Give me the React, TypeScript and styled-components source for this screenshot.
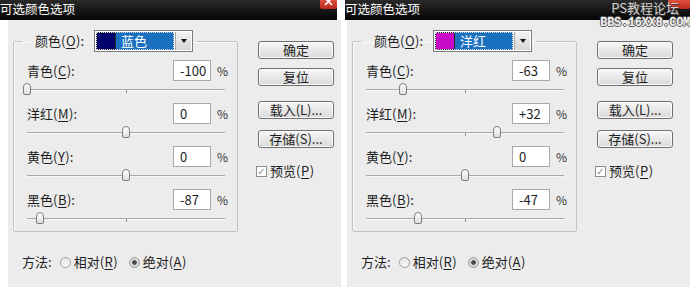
import React from 'react';
import styled, { createGlobalStyle } from 'styled-components';

const GlobalStyle = createGlobalStyle`
  html, body {
    margin: 0;
    padding: 0;
    background: #fff;
  }
  body {
    font-family: "Noto Sans CJK SC", "Liberation Sans", sans-serif;
    font-size: 13px;
    color: #1e1e1e;
  }
`;

type Channel = { name: string; key: string; value: number };
type DialogData = {
  color: string;
  swatch: string;
  channels: Channel[];
  edge: 'left' | 'right';
};

const dialogs: DialogData[] = [
  {
    color: '蓝色',
    swatch: '#03036e',
    edge: 'left',
    channels: [
      { name: '青色', key: 'C', value: -100 },
      { name: '洋红', key: 'M', value: 0 },
      { name: '黄色', key: 'Y', value: 0 },
      { name: '黑色', key: 'B', value: -87 },
    ],
  },
  {
    color: '洋红',
    swatch: '#c80ac8',
    edge: 'right',
    channels: [
      { name: '青色', key: 'C', value: -63 },
      { name: '洋红', key: 'M', value: 32 },
      { name: '黄色', key: 'Y', value: 0 },
      { name: '黑色', key: 'B', value: -47 },
    ],
  },
];

const fmt = (v: number) => (v > 0 ? `+${v}` : `${v}`);

const Page = styled.div`
  display: flex;
  width: 690px;
  height: 303px;
  overflow: hidden;
`;

const Window = styled.div<{ $edge: 'left' | 'right' }>`
  display: flex;
  flex-direction: column;
  width: ${(p) => (p.$edge === 'left' ? '341px' : 'auto')};
  flex: ${(p) => (p.$edge === 'left' ? 'none' : '1')};
  margin-left: ${(p) => (p.$edge === 'left' ? '0' : '-2px')};
  position: relative;
`;

const TitleBar = styled.div<{ $edge: 'left' | 'right' }>`
  position: relative;
  height: 20px;
  margin-left: ${(p) => (p.$edge === 'left' ? '0' : '6px')};
  margin-right: ${(p) => (p.$edge === 'left' ? '4px' : '0')};
  background: linear-gradient(#2a2a2a, #050505);
  color: #fff;
  font-size: 12.5px;
  line-height: 18px;
  white-space: nowrap;
  z-index: 2;
`;

const CloseButton = styled.div<{ $w: number }>`
  position: absolute;
  right: 0;
  top: 0;
  width: ${(p) => p.$w}px;
  height: 9px;
  background: linear-gradient(#e0503f, #b8281c);
  border-radius: 0 0 2px 2px;
  display: flex;
  justify-content: center;
  overflow: hidden;
`;

const Watermark = styled.div`
  position: absolute;
  right: 11px;
  top: 0;
  font-size: 13px;
  line-height: 16px;
  color: #cfcfcf;
  text-shadow: 1px 1px 0 #3a3a3a;
`;

const WatermarkUrl = styled.div`
  position: absolute;
  right: 0;
  top: 18px;
  font-family: "Liberation Mono", "DejaVu Sans Mono", monospace;
  font-weight: bold;
  font-size: 12px;
  line-height: 11px;
  color: #f2f2f2;
  text-shadow: -1px 0 0 #5a5a5a, 1px 0 0 #5a5a5a, 0 -1px 0 #5a5a5a, 0 1px 0 #5a5a5a;
  letter-spacing: -0.3px;
`;

const Body = styled.div`
  margin-left: 8px;
  height: 267px;
  box-sizing: border-box;
  background: #ececec;
  padding: 10px 0 0 5px;
  display: grid;
  grid-template-columns: 225px 76px;
  column-gap: 20px;
  align-items: start;
`;

const LeftCol = styled.div`
  display: flex;
  flex-direction: column;
`;

const Group = styled.fieldset`
  margin: 0;
  box-sizing: border-box;
  width: 225px;
  border: 1px solid #c3c3c3;
  border-radius: 2px;
  box-shadow: inset 1px 1px 0 #f8f8f8;
  padding: 8px 12px 7px 13px;
  display: flex;
  flex-direction: column;
  gap: 8px;
`;

const Legend = styled.legend`
  display: flex;
  align-items: center;
  margin-left: -5px;
  padding: 0 4px 0 13px;
  gap: 10px;
  line-height: 16px;
`;

const Label = styled.span`
  line-height: 16px;
  white-space: nowrap;
  u {
    text-underline-offset: 2px;
    margin: 0 0.5px;
  }
`;

const Dropdown = styled.div`
  width: 99px;
  height: 22px;
  box-sizing: border-box;
  border: 1px solid #7c7c7c;
  background: #fff;
  display: flex;
  padding: 1px;
  gap: 1px;
`;

const Selected = styled.div`
  flex: 1;
  display: flex;
  align-items: center;
  gap: 5px;
  background: #1a6fbf;
  outline: 1px dotted #d8d8d8;
  outline-offset: -1px;
  color: #fff;
  line-height: 16px;
`;

const Swatch = styled.span<{ $color: string }>`
  width: 20px;
  height: 100%;
  box-sizing: border-box;
  background: ${(p) => p.$color};
  border: 1px solid #2a2a2a;
`;

const Arrow = styled.div`
  width: 15px;
  display: flex;
  align-items: center;
  justify-content: center;
  background: linear-gradient(#f2f2f2, #d6d6d6);
  border-left: 1px solid #a9a9a9;
  &::after {
    content: '';
    border-left: 3px solid transparent;
    border-right: 3px solid transparent;
    border-top: 4px solid #111;
  }
`;

const Row = styled.div`
  display: flex;
  flex-direction: column;
`;

const InputLine = styled.div`
  display: flex;
  align-items: center;
  height: 21px;
`;

const Spacer = styled.div`
  flex: 1;
`;

const ValueBox = styled.div`
  width: 38px;
  height: 21px;
  box-sizing: border-box;
  border: 1px solid #a8a8a8;
  background: #fff;
  padding-left: 6px;
  line-height: 19px;
  font-size: 13px;
`;

const Percent = styled.span`
  width: 8px;
  margin-left: 6px;
  font-size: 12px;
  color: #333;
  line-height: 16px;
`;

const Slider = styled.div`
  position: relative;
  height: 12px;
  margin-top: 2px;
  &::before {
    content: '';
    position: absolute;
    left: 0;
    right: 0;
    top: 6px;
    height: 1px;
    background: #a8a8a8;
    box-shadow: 0 1px 0 #f7f7f7;
  }
  &::after {
    content: '';
    position: absolute;
    left: 50%;
    top: 7px;
    width: 1px;
    height: 3px;
    background: #8c8c8c;
  }
`;

const Thumb = styled.div`
  position: absolute;
  top: 0;
  width: 8px;
  height: 12px;
  box-sizing: border-box;
  margin-left: -4px;
  border: 1px solid #7e7e7e;
  border-radius: 4px 4px 2px 2px;
  background: linear-gradient(#ffffff, #dedede);
  z-index: 1;
`;

const Method = styled.div`
  margin-top: 22px;
  margin-left: 9px;
  display: flex;
  align-items: center;
  height: 16px;
  line-height: 16px;
  gap: 8px;
`;

const RadioItem = styled.label`
  display: flex;
  align-items: center;
  gap: 3px;
  margin-right: 3px;
`;

const Radio = styled.span<{ $on?: boolean }>`
  width: 11px;
  height: 11px;
  box-sizing: border-box;
  border-radius: 50%;
  border: 1px solid #9c9c9c;
  background: ${(p) =>
    p.$on
      ? 'radial-gradient(circle, #4a4a4a 0 2px, #d8d8d8 2.5px 100%)'
      : 'linear-gradient(#e6e6e6, #fafafa)'};
`;

const ButtonCol = styled.div`
  margin-top: 11px;
  display: flex;
  flex-direction: column;
  gap: 15px;
`;

const ButtonGroup = styled.div<{ $gap: number }>`
  display: flex;
  flex-direction: column;
  gap: ${(p) => p.$gap}px;
`;

const Button = styled.div`
  height: 18px;
  box-sizing: border-box;
  border: 1px solid #6f6f6f;
  border-radius: 3px;
  background: linear-gradient(#f7f7f7, #d9d9d9);
  box-shadow: inset 0 0 0 1px #fbfbfb;
  text-align: center;
  font-size: 13px;
  line-height: 15px;
`;

const CheckRow = styled.label`
  display: flex;
  align-items: center;
  gap: 3px;
  margin-left: -2px;
  line-height: 16px;
`;

const CheckBox = styled.span`
  width: 11px;
  height: 11px;
  box-sizing: border-box;
  border: 1px solid #8e8e8e;
  background: #fff;
  color: #8a8a8a;
  font-size: 10px;
  line-height: 9px;
  text-align: center;
  font-family: "DejaVu Sans", sans-serif;
`;

const Key = ({ k }: { k: string }) => <u>{k}</u>;

const CloseX = () => (
  <svg width="9" height="9" viewBox="0 0 9 9">
    <path d="M1 -2 L8 5 M8 -2 L1 5" stroke="#fff" strokeWidth="1.6" fill="none" />
  </svg>
);

const ChannelRow = ({ ch }: { ch: Channel }) => (
  <Row>
    <InputLine>
      <Label>
        {ch.name}(<Key k={ch.key} />):
      </Label>
      <Spacer />
      <ValueBox>{fmt(ch.value)}</ValueBox>
      <Percent>%</Percent>
    </InputLine>
    <Slider>
      <Thumb style={{ left: `${(ch.value + 100) / 2}%` }} />
    </Slider>
  </Row>
);

const Dialog = ({ d }: { d: DialogData }) => (
  <Window $edge={d.edge}>
    <TitleBar $edge={d.edge}>
      可选颜色选项
      {d.edge === 'left' ? (
        <CloseButton $w={17}>
          <CloseX />
        </CloseButton>
      ) : (
        <>
          <CloseButton $w={22} />
          <Watermark>PS教程论坛</Watermark>
          <WatermarkUrl>BBS.16XX8.COM</WatermarkUrl>
        </>
      )}
    </TitleBar>
    <Body>
      <LeftCol>
        <Group>
          <Legend>
            <Label>
              颜色(<Key k="O" />):
            </Label>
            <Dropdown>
              <Selected>
                <Swatch $color={d.swatch} />
                {d.color}
              </Selected>
              <Arrow />
            </Dropdown>
          </Legend>
          {d.channels.map((ch) => (
            <ChannelRow key={ch.key} ch={ch} />
          ))}
        </Group>
        <Method>
          <span>方法:</span>
          <RadioItem>
            <Radio />
            <Label>
              相对(<Key k="R" />)
            </Label>
          </RadioItem>
          <RadioItem>
            <Radio $on />
            <Label>
              绝对(<Key k="A" />)
            </Label>
          </RadioItem>
        </Method>
      </LeftCol>
      <ButtonCol>
        <ButtonGroup $gap={9}>
          <Button>确定</Button>
          <Button>复位</Button>
        </ButtonGroup>
        <ButtonGroup $gap={11}>
          <Button>载入(L)...</Button>
          <Button>存储(S)...</Button>
        </ButtonGroup>
        <CheckRow>
          <CheckBox>✓</CheckBox>
          <Label>
            预览(<Key k="P" />)
          </Label>
        </CheckRow>
      </ButtonCol>
    </Body>
  </Window>
);

export default function App() {
  return (
    <>
      <GlobalStyle />
      <Page>
        {dialogs.map((d) => (
          <Dialog key={d.edge} d={d} />
        ))}
      </Page>
    </>
  );
}
